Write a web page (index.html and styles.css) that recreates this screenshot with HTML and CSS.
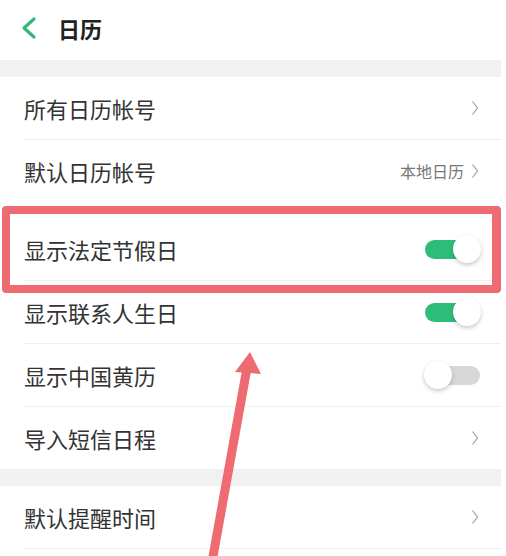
FILE: index.html
```html
<!DOCTYPE html>
<html lang="zh-CN">
<head>
<meta charset="utf-8">
<title>日历</title>
<link rel="stylesheet" href="styles.css">
</head>
<body>
<div class="page">
  <header class="topbar">
    <svg class="back" width="16" height="24" viewBox="0 0 16 24"><path d="M13 3 L3 12 L13 21" fill="none" stroke="#35b878" stroke-width="3.2" stroke-linecap="round" stroke-linejoin="round"/></svg>
    <span class="title">日历</span>
  </header>
  <div class="gap"></div>
  <div class="row sep"><span class="label">所有日历帐号</span><span class="right"><svg class="chev" width="8" height="16" viewBox="0 0 8 16"><path d="M1.5 1.5 L6.5 8 L1.5 14.5" fill="none" stroke="#a0a0a0" stroke-width="1.2"/></svg></span></div>
  <div class="row"><span class="label">默认日历帐号</span><span class="right"><span class="value">本地日历</span><svg class="chev" width="8" height="16" viewBox="0 0 8 16"><path d="M1.5 1.5 L6.5 8 L1.5 14.5" fill="none" stroke="#a0a0a0" stroke-width="1.2"/></svg></span></div>
  <div class="row tall sep"><span class="label">显示法定节假日</span><span class="right"><span class="switch on"><span class="knob"></span></span></span></div>
  <div class="row sep"><span class="label">显示联系人生日</span><span class="right"><span class="switch on"><span class="knob"></span></span></span></div>
  <div class="row sep"><span class="label">显示中国黄历</span><span class="right"><span class="switch"><span class="knob"></span></span></span></div>
  <div class="row"><span class="label">导入短信日程</span><span class="right"><svg class="chev" width="8" height="16" viewBox="0 0 8 16"><path d="M1.5 1.5 L6.5 8 L1.5 14.5" fill="none" stroke="#a0a0a0" stroke-width="1.2"/></svg></span></div>
  <div class="gap"></div>
  <div class="row sep"><span class="label">默认提醒时间</span><span class="right"><svg class="chev" width="8" height="16" viewBox="0 0 8 16"><path d="M1.5 1.5 L6.5 8 L1.5 14.5" fill="none" stroke="#a0a0a0" stroke-width="1.2"/></svg></span></div>

  <div class="highlight"></div>
  <svg class="arrow" width="506" height="556" viewBox="0 0 506 556">
    <line x1="212" y1="562" x2="247" y2="368" stroke="#ee6b71" stroke-width="9"/>
    <polygon points="250,352 235,372 261,374" fill="#ee6b71"/>
  </svg>
</div>
</body>
</html>
```

FILE: styles.css
```css
* { box-sizing: border-box; }
html, body { margin: 0; padding: 0; background: #fff; }
body {
  font-family: "Noto Sans CJK SC", "Noto Sans", sans-serif;
  color: #333;
}
.page {
  position: relative;
  width: 506px;
  height: 556px;
  overflow: hidden;
}
.topbar {
  height: 60px;
  display: flex;
  align-items: center;
  padding-left: 21px;
  padding-bottom: 4px;
}
.back { display: block; }
.title {
  margin-left: 21px;
  font-size: 22px;
  font-weight: 700;
  color: #222;
  line-height: 1;
}
.gap {
  width: 501px;
  height: 17px;
  background: #f1f1f1;
}
.row {
  width: 501px;
  height: 62px;
  padding-left: 24px;
  padding-right: 22px;
  display: flex;
  align-items: center;
  justify-content: space-between;
  position: relative;
}
.row.sep::after {
  content: "";
  position: absolute;
  left: 24px;
  right: 0;
  bottom: -1px;
  height: 1px;
  background: #efefef;
}
.row.sep { margin-bottom: 1px; }
.row.tall {
  height: 78px;
  padding-top: 16px;
}
.label {
  font-size: 22px;
  line-height: 1;
  color: #333;
}
.right {
  display: flex;
  align-items: center;
}
.value {
  font-size: 16px;
  color: #777;
  margin-right: 7px;
  line-height: 1;
}
.chev { display: block; }
.switch {
  position: relative;
  width: 55px;
  height: 19px;
  border-radius: 10px;
  background: #d8d8d8;
  margin-right: -1px;
}
.switch.on { background: #2ebd78; }
.knob {
  position: absolute;
  top: -5px;
  left: -1px;
  width: 28px;
  height: 28px;
  border-radius: 50%;
  background: #fff;
  box-shadow: 0 2px 4px rgba(0,0,0,0.22);
}
.switch.on .knob { left: auto; right: -1px; }
.highlight {
  position: absolute;
  left: 2px;
  top: 206px;
  width: 499px;
  height: 87px;
  border: 8px solid #ee6b71;
  border-right-width: 9px;
  border-radius: 4px;
}
.arrow {
  position: absolute;
  left: 0;
  top: 0;
  pointer-events: none;
}
```
